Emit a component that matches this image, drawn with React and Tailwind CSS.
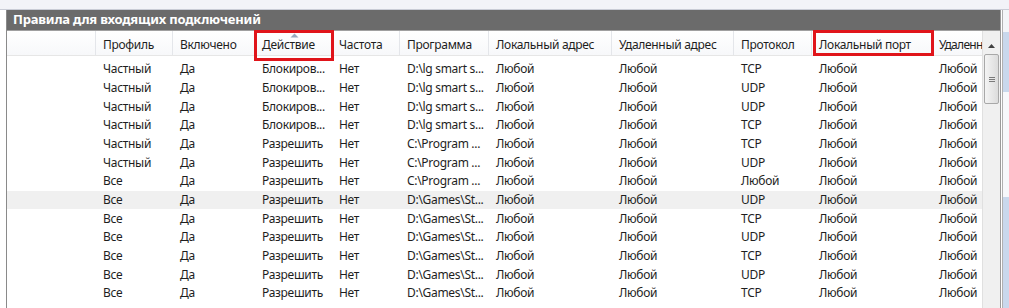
import React from "react";

const cols = [89, 77, 82, 77, 68, 89, 123, 122, 78, 120, 60];
const headers = ["", "Профиль", "Включено", "Действие", "Частота", "Программа", "Локальный адрес", "Удаленный адрес", "Протокол", "Локальный порт", "Удаленн"];

const lg = "D:\\lg smart s...";
const cp = "C:\\Program ...";
const gs = "D:\\Games\\St...";
const rows = [
  ["Частный", "Блокиров...", lg, "TCP"],
  ["Частный", "Блокиров...", lg, "UDP"],
  ["Частный", "Блокиров...", lg, "UDP"],
  ["Частный", "Блокиров...", lg, "TCP"],
  ["Частный", "Разрешить", cp, "TCP"],
  ["Частный", "Разрешить", cp, "UDP"],
  ["Все", "Разрешить", cp, "Любой"],
  ["Все", "Разрешить", gs, "UDP"],
  ["Все", "Разрешить", gs, "TCP"],
  ["Все", "Разрешить", gs, "UDP"],
  ["Все", "Разрешить", gs, "TCP"],
  ["Все", "Разрешить", gs, "UDP"],
  ["Все", "Разрешить", gs, "TCP"],
];

export default function App() {
  return (
    <div className="relative w-[1009px] h-[308px] overflow-hidden bg-white text-[12px] tracking-[-0.3px] text-[#1e1e1e] flex flex-col" style={{ fontFamily: '"Noto Sans", "Open Sans", sans-serif' }}>
      <div className="h-[10px] shrink-0 bg-[#f2f3f8] border-b border-[#c9ccd6]" />
      <div className="flex flex-1 min-h-0">
        <div className="w-[7px] shrink-0 bg-white border-r border-[#8a8a8a]" />
        <div className="w-[994px] shrink-0 flex flex-col border-r border-[#9a9a9a]">
          <div className="h-[21px] shrink-0 bg-[#6b6b6b] text-white font-bold text-[13px] tracking-[-0.2px] pl-[6px] flex items-center border-b border-[#a0a0a0]">
            Правила для входящих подключений
          </div>
          <div className="flex flex-1 min-h-0">
            <div className="w-[975px] shrink-0 overflow-hidden">
              <div className="flex h-[25px] bg-gradient-to-b from-white to-[#f7f8fa] border-b border-[#e6e6e6]">
                {headers.map((h, i) => (
                  <div key={i} style={{ width: cols[i] }} className={`relative shrink-0 h-full flex items-center pl-[7px] border-r border-[#e4e6ea] whitespace-nowrap overflow-hidden ${i === 10 ? "tracking-[-0.7px]" : ""}`}>
                    {i === 3 && (
                      <svg className="absolute left-[35px] top-[2px]" width="9" height="5" viewBox="0 0 9 5">
                        <path d="M0.5 4.5 L4.5 0.5 L8.5 4.5 Z" fill="#98a8bd" />
                      </svg>
                    )}
                    <span className="pt-[3px]">{h}</span>
                  </div>
                ))}
              </div>
              <div className="pt-[4px]">
                {rows.map((r, ri) => {
                  const cells = ["", r[0], "Да", r[1], "Нет", r[2], "Любой", "Любой", r[3], "Любой", "Любой"];
                  return (
                    <div key={ri} className={`flex h-[18.67px] items-center ${ri === 7 ? "bg-[#f0f0f0]" : ""}`}>
                      {cells.map((c, ci) => (
                        <div key={ci} style={{ width: cols[ci] }} className="shrink-0 pl-[7px] whitespace-nowrap overflow-hidden">
                          {c}
                        </div>
                      ))}
                    </div>
                  );
                })}
              </div>
            </div>
            <div className="w-[18px] shrink-0 bg-[#f0f0f0] border-l border-[#e0e0e0] flex flex-col">
              <div className="h-[17px] flex items-center justify-center mt-[6px]">
                <svg width="7" height="4" viewBox="0 0 7 4"><path d="M0 4 L3.5 0 L7 4 Z" fill="#404040" /></svg>
              </div>
              <div className="mx-[1px] h-[50px] rounded-[2px] border border-[#a8a8a8] bg-gradient-to-r from-[#f4f4f4] to-[#dcdcdc] flex flex-col items-center justify-center gap-[1px]">
                <div className="w-[6px] h-[1px] bg-[#7a7a7a]" />
                <div className="w-[6px] h-[1px] bg-[#7a7a7a]" />
                <div className="w-[6px] h-[1px] bg-[#7a7a7a]" />
              </div>
            </div>
          </div>
        </div>
        <div className="flex-1 flex flex-col bg-white border-l border-[#b0b0b0] ml-[1px]">
          <div className="h-[22px] bg-[#f4f5f8]" />
          <div className="h-[60px] bg-[#c9d8ec]" />
          <div className="h-[105px] bg-[#f7f8fb]" />
          <div className="flex-1 bg-[#c9d8ec]" />
        </div>
      </div>
      <div className="absolute left-[254px] top-[30px] w-[80px] h-[31px] border-[3px] border-[#e0141a] pointer-events-none" />
      <div className="absolute left-[813px] top-[30px] w-[121px] h-[26px] border-[3px] border-[#e0141a] pointer-events-none" />
    </div>
  );
}
